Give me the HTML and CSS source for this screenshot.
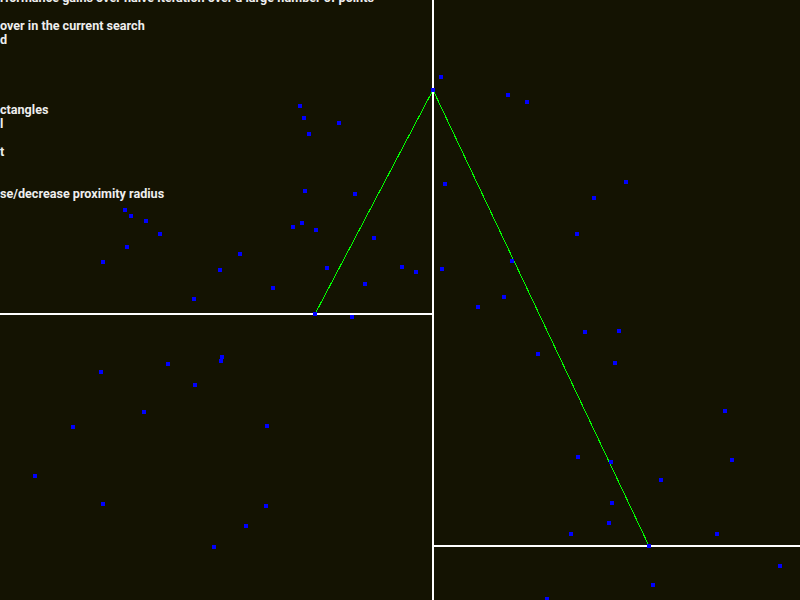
FILE: index.html
```html
<!DOCTYPE html>
<html>
<head>
<meta charset="utf-8">
<link rel="stylesheet" href="styles.css">
</head>
<body>
<div class="stage">
  <svg class="canvas" width="800" height="600" viewBox="0 0 800 600" xmlns="http://www.w3.org/2000/svg">
    <g class="bounds">
      <line x1="433" y1="0" x2="433" y2="600"/>
      <line x1="0" y1="314" x2="432" y2="314"/>
      <line x1="434" y1="546" x2="800" y2="546"/>
    </g>
    <g class="links">
      <line x1="433" y1="90" x2="315" y2="314"/>
      <line x1="433" y1="90" x2="649" y2="546"/>
    </g>
    <g class="points">
      <circle cx="300" cy="106" r="2.4"/>
      <circle cx="304" cy="118" r="2.4"/>
      <circle cx="339" cy="123" r="2.4"/>
      <circle cx="309" cy="134" r="2.4"/>
      <circle cx="305" cy="191" r="2.4"/>
      <circle cx="355" cy="194" r="2.4"/>
      <circle cx="125" cy="210" r="2.4"/>
      <circle cx="131" cy="216" r="2.4"/>
      <circle cx="146" cy="221" r="2.4"/>
      <circle cx="160" cy="234" r="2.4"/>
      <circle cx="127" cy="247" r="2.4"/>
      <circle cx="103" cy="262" r="2.4"/>
      <circle cx="240" cy="254" r="2.4"/>
      <circle cx="220" cy="270" r="2.4"/>
      <circle cx="194" cy="299" r="2.4"/>
      <circle cx="273" cy="288" r="2.4"/>
      <circle cx="293" cy="227" r="2.4"/>
      <circle cx="302" cy="223" r="2.4"/>
      <circle cx="316" cy="230" r="2.4"/>
      <circle cx="374" cy="238" r="2.4"/>
      <circle cx="327" cy="268" r="2.4"/>
      <circle cx="365" cy="284" r="2.4"/>
      <circle cx="315" cy="314" r="2.4"/>
      <circle cx="352" cy="317" r="2.4"/>
      <circle cx="222" cy="357" r="2.4"/>
      <circle cx="221" cy="361" r="2.4"/>
      <circle cx="168" cy="364" r="2.4"/>
      <circle cx="101" cy="372" r="2.4"/>
      <circle cx="195" cy="385" r="2.4"/>
      <circle cx="144" cy="412" r="2.4"/>
      <circle cx="73" cy="427" r="2.4"/>
      <circle cx="267" cy="426" r="2.4"/>
      <circle cx="35" cy="476" r="2.4"/>
      <circle cx="103" cy="504" r="2.4"/>
      <circle cx="266" cy="506" r="2.4"/>
      <circle cx="246" cy="526" r="2.4"/>
      <circle cx="214" cy="547" r="2.4"/>
      <circle cx="402" cy="267" r="2.4"/>
      <circle cx="416" cy="272" r="2.4"/>
      <circle cx="442" cy="269" r="2.4"/>
      <circle cx="577" cy="234" r="2.4"/>
      <circle cx="512" cy="261" r="2.4"/>
      <circle cx="504" cy="297" r="2.4"/>
      <circle cx="478" cy="307" r="2.4"/>
      <circle cx="585" cy="332" r="2.4"/>
      <circle cx="619" cy="331" r="2.4"/>
      <circle cx="615" cy="363" r="2.4"/>
      <circle cx="538" cy="354" r="2.4"/>
      <circle cx="441" cy="77" r="2.4"/>
      <circle cx="433" cy="90" r="2.4"/>
      <circle cx="508" cy="95" r="2.4"/>
      <circle cx="527" cy="102" r="2.4"/>
      <circle cx="445" cy="184" r="2.4"/>
      <circle cx="594" cy="198" r="2.4"/>
      <circle cx="626" cy="182" r="2.4"/>
      <circle cx="725" cy="411" r="2.4"/>
      <circle cx="578" cy="457" r="2.4"/>
      <circle cx="611" cy="462" r="2.4"/>
      <circle cx="732" cy="460" r="2.4"/>
      <circle cx="661" cy="480" r="2.4"/>
      <circle cx="612" cy="503" r="2.4"/>
      <circle cx="609" cy="523" r="2.4"/>
      <circle cx="571" cy="534" r="2.4"/>
      <circle cx="717" cy="534" r="2.4"/>
      <circle cx="649" cy="546" r="2.4"/>
      <circle cx="780" cy="566" r="2.4"/>
      <circle cx="653" cy="585" r="2.4"/>
      <circle cx="547" cy="599" r="2.4"/>
    </g>
  </svg>
  <div class="help">
    <div class="line">rformance gains over naive iteration over a large number of points</div>
    <div class="line"> </div>
    <div class="line">over in the current search</div>
    <div class="line">d</div>
    <div class="line"> </div>
    <div class="line"> </div>
    <div class="line"> </div>
    <div class="line"> </div>
    <div class="line">ctangles</div>
    <div class="line">l</div>
    <div class="line"> </div>
    <div class="line">t</div>
    <div class="line"> </div>
    <div class="line"> </div>
    <div class="line">se/decrease proximity radius</div>
  </div>
</div>
</body>
</html>
```
FILE: styles.css
```css
html, body {
  margin: 0;
  padding: 0;
  background: #141302;
}
.stage {
  position: relative;
  width: 800px;
  height: 600px;
  overflow: hidden;
  background: #141302;
}
.canvas {
  display: block;
}
.bounds line {
  stroke: #ffffff;
  stroke-width: 2;
  shape-rendering: crispEdges;
}
.links line {
  stroke: #00ff00;
  stroke-width: 1;
  shape-rendering: crispEdges;
}
.points circle {
  fill: #0000ff;
  shape-rendering: crispEdges;
}
.help {
  position: absolute;
  left: 0;
  top: -9px;
  font-family: Roboto, "Liberation Sans", sans-serif;
  font-weight: 700;
  font-size: 12.6px;
  line-height: 14px;
  color: #eeeeee;
}
.line {
  white-space: pre;
  height: 14px;
}
```
